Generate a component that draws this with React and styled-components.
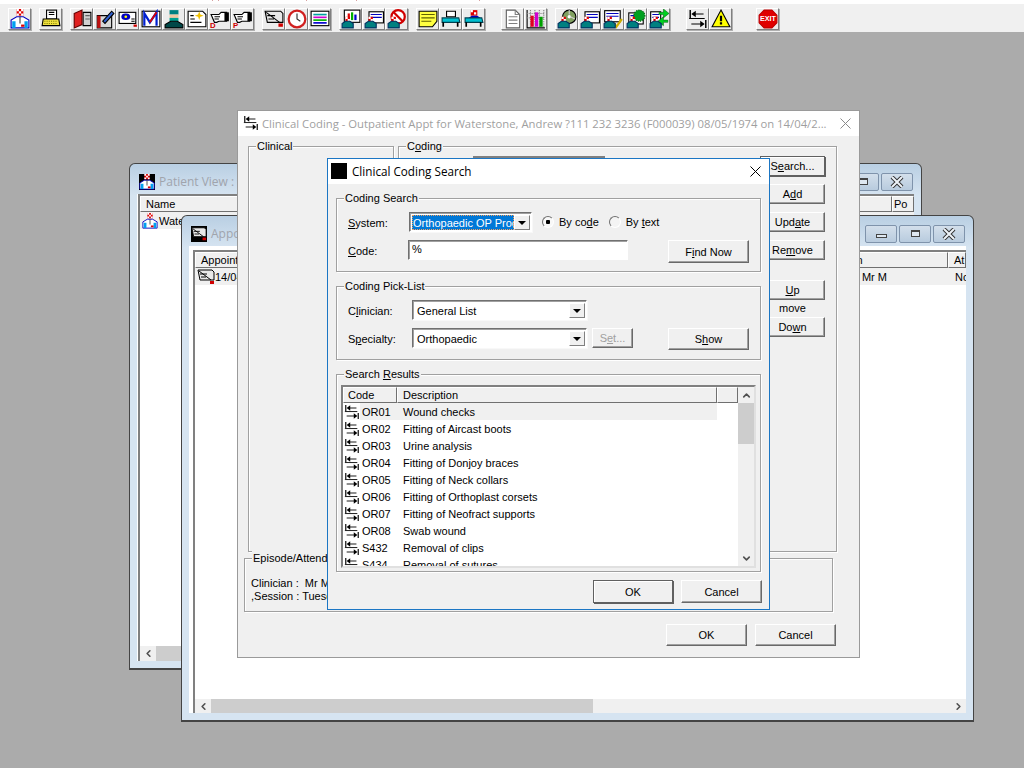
import styled, { createGlobalStyle } from "styled-components";
import { ChevronUp, ChevronDown, ChevronLeft, ChevronRight } from "lucide-react";

const GlobalStyle = createGlobalStyle`
  html, body { margin: 0; padding: 0; }
  body {
    background: #ababab;
    font-family: "Liberation Sans", Arial, sans-serif;
    font-size: 11px;
    color: #000;
    overflow: hidden;
  }
  * { box-sizing: border-box; }
`;

/* ---------- icons ---------- */

const Glyph = styled.svg`
  display: block;
  flex: none;
  width: ${({ $size }) => $size || 18}px;
  height: ${({ $size }) => $size || 18}px;
`;

const Icon = ({ size, children }) => (
  <Glyph $size={size} viewBox="0 0 18 18">
    {children}
  </Glyph>
);

const Person = ({ x = 0, y = 0 }) => (
  <g transform={`translate(${x} ${y})`}>
    <rect x="6" y="0" width="6" height="6" fill="#e00000" />
    <path d="M6 0h2v2H6zM10 0h2v2h-2zM8 2h2v2H8zM6 4h2v2H6zM10 4h2v2h-2z" fill="#fff" />
    <path d="M1 17v-7l5-3h6l5 3v7z" fill="#fff" stroke="#0000c0" />
    <path d="M2 17v-6h3v6zM13 11h3v6h-3z" fill="#00a0f0" />
    <rect x="10" y="14" width="3" height="2" fill="#e00000" />
    <path d="M9 7v6" stroke="#404040" />
  </g>
);

const Small = ({ x = 0, y = 0 }) => (
  <g transform={`translate(${x} ${y})`}>
    <rect x="3" y="0" width="4" height="4" fill="#e00000" />
    <path d="M3 0h2v2H3zM5 2h2v2H5z" fill="#fff" />
    <path d="M0 10V6l3-2h4l3 2v4z" fill="#008080" stroke="#003060" />
  </g>
);

const Form = ({ x = 0, y = 0, w = 13, h = 10 }) => (
  <g transform={`translate(${x} ${y})`}>
    <rect x="0.5" y="0.5" width={w} height={h} fill="#fff" stroke="#000" />
    <path d={`M2 3h${w - 3}M2 5.5h${w - 3}`} stroke="#0000c0" />
  </g>
);

const Arrows = ({ size = 16 }) => (
  <Icon size={size}>
    <path d="M2 1v7M16 10v7" stroke="#000" strokeWidth="1.3" />
    <path d="M3 4.500l4-3v6zM15 13.500l-4-3v6z" fill="#000" />
    <path d="M6 4.500h8M1 8.500h14M3 13.500h9" stroke="#000" />
  </Icon>
);

const DoctorIcon = () => <Icon><Person /></Icon>;
const TypewriterIcon = () => (
  <Icon>
    <rect x="5" y="1" width="9" height="8" fill="#fff" stroke="#000" />
    <path d="M7 3h5M7 5h5" stroke="#000" />
    <path d="M2 9h14l1 6H1z" fill="#f0e040" stroke="#000" />
    <path d="M3 11h12M3 13h12" stroke="#808000" strokeDasharray="1 1" />
  </Icon>
);
const BookIcon = () => (
  <Icon>
    <path d="M10 3h7v12h-7z" fill="#d0d0d0" stroke="#000" />
    <path d="M12 6h4M12 9h4" stroke="#606060" />
    <path d="M2 4l7-3v13l-7 3z" fill="#e02020" stroke="#600" />
  </Icon>
);
const NotebookIcon = () => (
  <Icon>
    <path d="M2 6h13v11H2z" fill="#d8d8d8" stroke="#000" />
    <path d="M2 6h3v11H2z" fill="#c01010" />
    <path d="M7 11L15 2l2 2-8 9z" fill="#3060d0" stroke="#000" />
  </Icon>
);
const ScanIcon = () => (
  <Icon>
    <rect x="1" y="3" width="15" height="10" fill="#fff" stroke="#000" />
    <ellipse cx="7" cy="7" rx="4" ry="3" fill="#0000c0" />
    <circle cx="7" cy="7" r="1.200" fill="#ffff00" />
    <path d="M12 9h3M12 11h3" stroke="#000" />
    <rect x="14" y="14" width="3" height="2" fill="#d00000" />
  </Icon>
);
const MailIcon = () => (
  <Icon>
    <rect x="1" y="2" width="16" height="14" fill="#fff" stroke="#000" />
    <path d="M3 15V4l5 8 6-9v12" fill="none" stroke="#0020d0" strokeWidth="2" />
    <path d="M8 12l6-9" stroke="#e00000" strokeWidth="1.500" />
  </Icon>
);
const SurgeonIcon = () => (
  <Icon>
    <path d="M5 1h8v4H5z" fill="#008080" />
    <rect x="5" y="5" width="8" height="3" fill="#f0c8a0" />
    <path d="M5 8h8v3H5z" fill="#00a090" />
    <path d="M1 17v-3l5-3h6l5 3v3z" fill="#004848" stroke="#000" />
  </Icon>
);
const StarNoteIcon = () => (
  <Icon>
    <path d="M1 2h13l3 3v11H1z" fill="#fff" stroke="#000" />
    <path d="M3 6h3M3 9h4M3 12h10" stroke="#000" />
    <path d="M11 2l1 3 3 1-3 1-1 3-1-3-3-1 3-1z" fill="#f0c000" />
  </Icon>
);
const HandIcon = ({ letter }) => (
  <Icon>
    <path d="M1 5h7l2-2h5v8H8l-2 1H4z" fill="#fff" stroke="#000" />
    <path d="M13 3h4v8h-4z" fill="#000" />
    <path d="M4 7h5M4 9h4" stroke="#000" />
    <text x="0" y="17" fontSize="7" fontWeight="700" fill="#d00000" fontFamily="Liberation Sans">{letter}</text>
  </Icon>
);
const ApptIcon = ({ size }) => (
  <Icon size={size}>
    <path d="M1 2h14l2 2v8H3z" fill="#e8e8e8" stroke="#000" />
    <path d="M2 3l12 9M3 6h7M4 9h5" stroke="#000" />
    <rect x="13" y="13" width="4" height="3" fill="#d00000" />
  </Icon>
);
const ClockIcon = () => (
  <Icon>
    <circle cx="9" cy="9" r="7.500" fill="#fff" stroke="#d02020" strokeWidth="2" />
    <path d="M9 4v5l3 2" fill="none" stroke="#303030" />
  </Icon>
);
const MonitorIcon = () => (
  <Icon>
    <rect x="1" y="2" width="16" height="13" fill="#fff" stroke="#000" />
    <path d="M3 5h12" stroke="#00a0a0" strokeWidth="1.500" />
    <path d="M3 7.500h12" stroke="#d000d0" strokeWidth="1.500" />
    <path d="M3 10h12" stroke="#00b000" strokeWidth="1.500" />
    <path d="M3 12.500h12" stroke="#0000d0" strokeWidth="1.500" />
  </Icon>
);
const ChartPersonIcon = () => (
  <Icon>
    <rect x="3" y="1" width="14" height="11" fill="#fff" stroke="#000" />
    <path d="M6 4h2v6H6z" fill="#e00000" />
    <path d="M9 3h2v7H9z" fill="#00b000" />
    <path d="M12 5h2v5h-2z" fill="#0000d0" />
    <Small x="1" y="7" />
  </Icon>
);
const FormPersonIcon = () => (
  <Icon>
    <Form x="4" y="2" />
    <Small x="1" y="7" />
  </Icon>
);
const NoPersonIcon = () => (
  <Icon>
    <circle cx="10" cy="7" r="6" fill="#fff" stroke="#d00000" strokeWidth="2" />
    <path d="M6 3l8 8" stroke="#d00000" strokeWidth="2" />
    <Small x="1" y="7" />
  </Icon>
);
const StickyIcon = () => (
  <Icon>
    <path d="M1 2h16v9l-4 5H1z" fill="#ffff40" stroke="#000" />
    <path d="M3 5h12M3 8h12M3 11h9" stroke="#606000" />
  </Icon>
);
const BedIcon = () => (
  <Icon>
    <path d="M5 2h8v5H5z" fill="#fff" stroke="#000" />
    <path d="M1 8h15l1 4H1z" fill="#00c0d0" stroke="#004050" />
    <path d="M2 12v4M15 12v4" stroke="#000" strokeWidth="1.500" />
  </Icon>
);
const BedPersonIcon = () => (
  <Icon>
    <rect x="6" y="1" width="6" height="5" fill="#e00000" />
    <path d="M6 1h2v2H6zM9 3h2v2H9z" fill="#fff" />
    <path d="M4 8l3-2h5l3 2z" fill="#0000c0" />
    <path d="M1 8h15l1 4H1z" fill="#00c0d0" stroke="#004050" />
    <path d="M2 12v4M15 12v4" stroke="#000" strokeWidth="1.500" />
  </Icon>
);
const PageIcon = () => (
  <Icon>
    <path d="M3 1h8l4 4v12H3z" fill="#fff" stroke="#606060" />
    <path d="M11 1v4h4M5 7h8M5 10h8M5 13h8" fill="none" stroke="#808080" />
  </Icon>
);
const BarsIcon = () => (
  <Icon>
    <path d="M1 1v16h16" fill="none" stroke="#000" />
    <path d="M1 4h16M1 8h16M4 1v16M8 1v16M12 1v16M16 1v16" stroke="#808080" strokeDasharray="1 1" />
    <path d="M4 6h3v10H4z" fill="#e00020" />
    <path d="M8 3h3v13H8z" fill="#d000d0" />
    <path d="M12 7h3v9h-3z" fill="#00a000" />
  </Icon>
);
const DiscIcon = () => (
  <Icon>
    <circle cx="11" cy="7" r="6" fill="#80a060" stroke="#000" />
    <circle cx="11" cy="7" r="1.500" fill="#fff" />
    <path d="M11 1v4M16 9l-4-2" stroke="#d0d0d0" />
    <Small x="1" y="7" />
  </Icon>
);
const CheckFormIcon = () => (
  <Icon>
    <Form x="1" y="1" w="14" h="10" />
    <path d="M10 13l2 3 5-7" fill="none" stroke="#d0b000" strokeWidth="2" />
    <Small x="1" y="7" />
  </Icon>
);
const GlobeIcon = () => (
  <Icon>
    <Form x="2" y="3" />
    <circle cx="12" cy="6" r="5" fill="#00a020" stroke="#006010" strokeDasharray="1 1" />
    <Small x="1" y="7" />
  </Icon>
);
const SwapIcon = () => (
  <Icon>
    <Form x="1" y="2" w="9" h="11" />
    <path d="M9 3h4V0l5 4-5 4V5H9z" fill="#00d020" stroke="#006010" strokeWidth="0.500" />
    <path d="M17 10h-4V7l-5 4 5 4v-3h4z" fill="#00d020" stroke="#006010" strokeWidth="0.500" />
    <Small x="1" y="7" />
  </Icon>
);
const WarningIcon = () => (
  <Icon>
    <path d="M9 1l8 15H1z" fill="#ffff00" stroke="#000" />
    <path d="M8 6h2v5H8zM8 12h2v2H8z" fill="#000" />
  </Icon>
);
const ExitIcon = () => (
  <Icon size={20}>
    <path d="M5.500 1h7L17 5.500v7L12.500 17h-7L1 12.500v-7z" fill="#e00000" stroke="#c00000" />
    <text x="9" y="11.200" fontSize="6.500" fontWeight="700" fill="#fff" textAnchor="middle" fontFamily="Liberation Sans">EXIT</text>
  </Icon>
);
const DarkIcon = styled.span`
  display: block;
  flex: none;
  width: 16px;
  height: 16px;
  background: #000;
`;

const HandD = () => <HandIcon letter="D" />;
const HandP = () => <HandIcon letter="P" />;
const CodingIcon = () => <Arrows size={18} />;

const toolGroups = [
  { tools: [DoctorIcon] },
  { tools: [TypewriterIcon] },
  { tools: [BookIcon, NotebookIcon, ScanIcon, MailIcon, SurgeonIcon, StarNoteIcon, HandD, HandP] },
  { tools: [ApptIcon, ClockIcon, MonitorIcon] },
  { tools: [ChartPersonIcon, FormPersonIcon, NoPersonIcon] },
  { tools: [StickyIcon, BedIcon, BedPersonIcon] },
  { tools: [PageIcon, BarsIcon], push: 8 },
  { tools: [DiscIcon, FormPersonIcon, CheckFormIcon, GlobeIcon, SwapIcon] },
  { tools: [CodingIcon, WarningIcon], push: 8 },
];

/* ---------- shell ---------- */

const TopStrip = styled.div`
  height: 4px;
  background:
    linear-gradient(#d8a0a0, #d8a0a0) 212px 0 / 1px 1px no-repeat,
    linear-gradient(#d8a0a0, #d8a0a0) 218px 0 / 1px 1px no-repeat,
    linear-gradient(#d8a0a0, #d8a0a0) 306px 0 / 1px 1px no-repeat,
    linear-gradient(#d8a0a0, #d8a0a0) 356px 0 / 1px 1px no-repeat,
    linear-gradient(#d8a0a0, #d8a0a0) 479px 0 / 1px 1px no-repeat,
    #fff;
`;

const Toolbar = styled.div`
  display: flex;
  gap: 8px;
  height: 28px;
  padding: 4px 0 0 8px;
  background: #f0f0f0;
`;

const ToolGroup = styled.div`
  display: flex;
  margin-left: ${({ $push }) => $push || 0}px;
`;

const ToolButton = styled.div`
  display: flex;
  align-items: center;
  justify-content: center;
  width: 23px;
  height: 22px;
  background: #ececec;
  border: 1px solid;
  border-color: #fff #808080 #808080 #fff;
  box-shadow: 1px 1px 0 #b0b0b0;

  svg {
    width: 20px;
    height: 20px;
  }
`;

const ExitButton = styled(ToolButton)`
  margin-left: 16px;
`;

const Desktop = styled.div`
  position: relative;
  height: 736px;
  overflow: hidden;
`;

const AppWindow = styled.div`
  position: absolute;
  left: ${({ $x }) => $x}px;
  top: ${({ $y }) => $y}px;
  width: ${({ $w }) => $w}px;
  height: ${({ $h }) => $h}px;
  display: flex;
  flex-direction: column;
  padding: 0 7px 7px;
  background: linear-gradient(#b9cfe3 0, #d6e4f1 32px);
  border: 1px solid #444;
  border-bottom-width: 2px;
  border-radius: 6px 6px 0 0;
`;

const AppTitle = styled.div`
  display: flex;
  align-items: center;
  flex: none;
  height: 30px;
  padding: 5px 1px 0 2px;
  gap: 4px;
  font-family: "Open Sans", sans-serif;
  font-size: 12px;
  color: #a0a4ac;
`;

const AppControls = styled.div`
  display: flex;
  gap: 2px;
  margin-left: auto;
`;

const CaptionButton = styled.div`
  display: flex;
  align-items: center;
  justify-content: center;
  width: 32px;
  height: 18px;
  background: linear-gradient(#d3dfeb, #b8cbde);
  border: 1px solid #7f93ab;
  border-radius: 2px;
`;

const CaptionGlyph = styled.span`
  display: block;
  width: ${({ $wide }) => ($wide ? 11 : 9)}px;
  height: ${({ $wide }) => ($wide ? 4 : 7)}px;
  margin-top: ${({ $wide }) => ($wide ? 4 : 0)}px;
  background: #dfe8f1;
  border: 1px solid #444;
  border-top-width: ${({ $wide }) => ($wide ? 1 : 2)}px;
`;

const AppClient = styled.div`
  flex: 1;
  min-height: 0;
  display: flex;
  flex-direction: column;
  background: #fff;
`;

const Sunken = styled.div`
  flex: 1;
  min-height: 0;
  display: flex;
  flex-direction: column;
  overflow: hidden;
  margin-top: ${({ $top }) => $top}px;
  margin-left: ${({ $left }) => $left}px;
  border-top: 2px solid #808080;
  border-left: 2px solid #808080;
`;

const ColumnHead = styled.div`
  display: flex;
  flex: none;
  height: 16px;
  background: #f0f0f0;
`;

const HeadCell = styled.div`
  width: ${({ $w }) => ($w ? `${$w}px` : "auto")};
  flex: ${({ $w }) => ($w ? "none" : 1)};
  height: 100%;
  padding: 0 0 0 ${({ $pad }) => $pad ?? 5}px;
  line-height: 14px;
  white-space: nowrap;
  overflow: hidden;
  border: 1px solid;
  border-color: #fff #707070 #707070 #fff;
`;

const AppRow = styled.div`
  display: flex;
  align-items: center;
  flex: none;
  height: 17px;
  padding-left: ${({ $pad }) => $pad || 0}px;
  background: ${({ $shade }) => ($shade ? "#f0f0f0" : "#fff")};
  white-space: nowrap;
`;

const RowSpacer = styled.div`
  flex: 1;
`;

const RowGap = styled.span`
  flex: none;
  width: ${({ $w }) => $w}px;
`;

const ClippedCell = styled.span`
  flex: none;
  width: ${({ $w }) => $w}px;
  overflow: hidden;
`;

const HScroll = styled.div`
  display: flex;
  flex: none;
  align-items: center;
  height: ${({ $h }) => $h}px;
  background: #f0f0f0;
`;

const ScrollEnd = styled.div`
  display: flex;
  align-items: center;
  justify-content: center;
  flex: none;
  width: 16px;
  height: 100%;
  color: #505050;
`;

const ScrollThumb = styled.div`
  flex: none;
  width: ${({ $w }) => $w}px;
  height: 100%;
  background: #cdcdcd;
`;

/* ---------- white-title dialogs ---------- */

const Dialog = styled.div`
  position: absolute;
  left: ${({ $x }) => $x}px;
  top: ${({ $y }) => $y}px;
  width: ${({ $w }) => $w}px;
  height: ${({ $h }) => $h}px;
  display: flex;
  flex-direction: column;
  background: #f0f0f0;
  border: 1px solid ${({ $active }) => ($active ? "#1b76c4" : "#9a9a9a")};
`;

const DialogTitle = styled.div`
  display: flex;
  align-items: center;
  flex: none;
  height: 25px;
  gap: ${({ $gap }) => $gap}px;
  padding: 0 8px 1px ${({ $pad }) => $pad}px;
  background: #fff;
  font-family: "Open Sans", sans-serif;
  font-size: ${({ $fs }) => $fs}px;
  white-space: nowrap;
  color: ${({ $active }) => ($active ? "#000" : "#9f9f9f")};
`;

const CloseMark = styled.svg`
  flex: none;
  width: 11px;
  height: 11px;
  margin-left: auto;
  stroke: ${({ $active }) => ($active ? "#000" : "#8a8a8a")};
`;

const Close = ({ active }) => (
  <CloseMark $active={active} viewBox="0 0 11 11">
    <path d="M0.500 0.500l10 10M10.500 0.500l-10 10" strokeWidth="1" />
  </CloseMark>
);

const GroupBox = styled.div`
  position: relative;
  flex: ${({ $grow }) => ($grow ? 1 : "none")};
  width: ${({ $w }) => ($w ? `${$w}px` : "auto")};
  height: ${({ $h }) => ($h ? `${$h}px` : "auto")};
  margin: ${({ $margin }) => $margin || 0};
  padding: ${({ $pad }) => $pad || 0};
  border: 1px solid #a0a0a0;
  box-shadow: 1px 1px 0 #fff, inset 1px 1px 0 #fff;
`;

const Legend = styled.span`
  position: absolute;
  left: 7px;
  top: -8px;
  padding: 0 1px;
  background: #f0f0f0;
  line-height: 14px;
  white-space: nowrap;
`;

const Key = styled.span`
  text-decoration: underline;
`;

const Button = styled.div`
  display: flex;
  align-items: center;
  justify-content: center;
  flex: none;
  width: ${({ $w }) => $w}px;
  height: ${({ $h }) => $h || 20}px;
  margin-left: ${({ $left }) => ($left ? `${$left}px` : "0")};
  ${({ $auto }) => $auto && "margin-left: auto;"}
  background: #f0f0f0;
  white-space: nowrap;
  color: ${({ $off }) => ($off ? "#a0a0a0" : "#000")};
  border: 1px solid;
  border-color: ${({ $default }) =>
    $default ? "#606060" : "#fff #696969 #696969 #fff"};
  box-shadow: ${({ $default }) =>
    $default
      ? "inset 1px 1px 0 #fff, 1px 1px 0 #606060"
      : "inset -1px -1px 0 #a0a0a0"};
`;

/* clinical coding window */

const ClinicalBody = styled.div`
  flex: 1;
  display: flex;
  flex-direction: column;
  padding: 10px 22px 0 10px;
`;

const ClinicalTop = styled.div`
  display: flex;
  flex: none;
  gap: 4px;
  height: 406px;
`;

const CodingInner = styled.div`
  display: flex;
  justify-content: space-between;
  padding: 9px 11px 0 74px;
`;

const CodingStub = styled.div`
  width: 132px;
  height: 2px;
  background: #808080;
`;

const SideButtons = styled.div`
  display: flex;
  flex-direction: column;
  gap: 8px;
`;

const SideGap = styled.div`
  height: 4px;
`;

const MoveLabel = styled.div`
  height: 9px;
  margin: -4px 0;
  line-height: 9px;
  text-align: center;
`;

const EpisodeLine = styled.div`
  line-height: 13px;
  white-space: pre;
`;

const EpisodeText = styled.div`
  padding-top: 18px;
  padding-left: 6px;
`;

const BottomButtons = styled.div`
  display: flex;
  justify-content: flex-end;
  gap: 8px;
  margin: 12px 1px 0 0;
`;

/* search dialog */

const SearchBody = styled.div`
  flex: 1;
  display: flex;
  flex-direction: column;
  padding: 14px 8px 0;
`;

const FormRow = styled.div`
  display: flex;
  align-items: flex-start;
  margin-top: ${({ $top }) => $top || 0}px;
`;

const FieldLabel = styled.div`
  flex: none;
  width: ${({ $w }) => $w}px;
  height: 20px;
  line-height: 22px;
`;

const ComboBox = styled.div`
  display: flex;
  flex: none;
  width: ${({ $w }) => $w}px;
  height: 20px;
  padding: 2px 1px 1px 2px;
  background: #fff;
  border: 1px solid;
  border-color: #707070 #fff #fff #707070;
  box-shadow: inset 1px 1px 0 #a0a0a0, 1px 1px 0 #f8f8f8;
`;

const ComboText = styled.div`
  flex: 1;
  min-width: 0;
  overflow: hidden;
  padding-left: ${({ $picked }) => ($picked ? 1 : 2)}px;
  line-height: 17px;
  white-space: nowrap;
  ${({ $picked }) => $picked && "background: #0078d7; color: #fff; outline: 1px dotted #f0a060; outline-offset: -1px;"}
`;

const ComboArrow = styled.div`
  display: flex;
  align-items: center;
  justify-content: center;
  flex: none;
  width: 16px;
  background: #f0f0f0;
  border: 1px solid;
  border-color: #fff #808080 #808080 #fff;
  &::after {
    content: "";
    border-style: solid;
    border-width: 4px 4px 0;
    border-color: #000 transparent transparent;
  }
`;

const RadioDot = styled.span`
  display: block;
  flex: none;
  width: 12px;
  height: 12px;
  border-radius: 50%;
  border: 1px solid;
  border-color: #707070 #fff #fff #707070;
  background: ${({ $on }) =>
    $on ? "radial-gradient(circle, #000 0 2px, #f8f8f8 2.500px)" : "#f4f4f4"};
`;

const RadioItem = styled.div`
  display: flex;
  align-items: center;
  flex: none;
  gap: 5px;
  height: 20px;
  margin-left: ${({ $left }) => $left}px;
`;

const TextField = styled.div`
  flex: none;
  width: ${({ $w }) => $w}px;
  height: 20px;
  padding: 1px 3px;
  background: #fff;
  line-height: 15px;
  border: 1px solid;
  border-color: #707070 #fff #fff #707070;
  box-shadow: inset 1px 1px 0 #a0a0a0;
`;

const ResultList = styled.div`
  display: flex;
  height: 183px;
  overflow: hidden;
  background: #fff;
  border: 2px solid;
  border-color: #808080 #e0e0e0 #e0e0e0 #808080;
`;

const ResultMain = styled.div`
  flex: 1;
  min-width: 0;
  display: flex;
  flex-direction: column;
  overflow: hidden;
`;

const ResultRow = styled.div`
  display: flex;
  align-items: center;
  flex: none;
  height: 17px;
  padding-left: 1px;
`;

const RowCell = styled.div`
  display: flex;
  align-items: center;
  width: 357px;
  height: 100%;
  background: ${({ $shade }) => ($shade ? "#f0f0f0" : "transparent")};
`;

const CodeText = styled.span`
  width: 43px;
  padding-left: 2px;
`;

const VScroll = styled.div`
  display: flex;
  flex-direction: column;
  flex: none;
  width: 16px;
  background: #f0f0f0;
`;

const VScrollEnd = styled.div`
  display: flex;
  align-items: center;
  justify-content: center;
  flex: none;
  height: 16px;
  color: #505050;
`;

const VThumb = styled.div`
  flex: none;
  height: 41px;
  background: #cdcdcd;
`;

const VTrack = styled.div`
  flex: 1;
`;

const SearchButtons = styled.div`
  display: flex;
  justify-content: flex-end;
  gap: 8px;
  margin: 8px -1px 0 0;
`;

const results = [
  ["OR01", "Wound checks"],
  ["OR02", "Fitting of Aircast boots"],
  ["OR03", "Urine analysis"],
  ["OR04", "Fitting of Donjoy braces"],
  ["OR05", "Fitting of Neck collars"],
  ["OR06", "Fitting of Orthoplast corsets"],
  ["OR07", "Fitting of Neofract supports"],
  ["OR08", "Swab wound"],
  ["S432", "Removal of clips"],
  ["S434", "Removal of sutures"],
];

const OnBlack = styled.span`
  display: block;
  flex: none;
  background: #000;
`;

const Caption = ({ withMin }) => (
  <AppControls>
    {withMin && (
      <CaptionButton>
        <CaptionGlyph $wide />
      </CaptionButton>
    )}
    <CaptionButton>
      <CaptionGlyph />
    </CaptionButton>
    <CaptionButton>
      <svg width="14" height="12" viewBox="0 0 14 12">
        <path d="M2 1l10 10M12 1L2 11" stroke="#333" strokeWidth="4" />
        <path d="M2 1l10 10M12 1L2 11" stroke="#eef3f8" strokeWidth="2" />
      </svg>
    </CaptionButton>
  </AppControls>
);

export default function App() {
  return (
    <>
      <GlobalStyle />
      <TopStrip />
      <Toolbar>
        {toolGroups.map((group, g) => (
          <ToolGroup key={g} $push={group.push}>
            {group.tools.map((Tool, i) => (
              <ToolButton key={i}>
                <Tool />
              </ToolButton>
            ))}
          </ToolGroup>
        ))}
        <ExitButton>
          <ExitIcon />
        </ExitButton>
      </Toolbar>

      <Desktop>
        {/* patient view, furthest back */}
        <AppWindow $x={129} $y={131} $w={793} $h={507}>
          <AppTitle>
            <OnBlack>
              <Icon size={16}><Person /></Icon>
            </OnBlack>
            Patient View : 1
            <Caption withMin />
          </AppTitle>
          <AppClient>
            <Sunken $top={0} $left={1}>
              <ColumnHead>
                <HeadCell $pad={5}>Name</HeadCell>
                <HeadCell $w={22} $pad={1}>Po</HeadCell>
              </ColumnHead>
              <AppRow $shade $pad={2}>
                <Icon size={16}><Person /></Icon>
                <RowGap $w={1} />
                Waterstone
              </AppRow>
              <RowSpacer />
              <HScroll $h={15}>
                <ScrollEnd><ChevronLeft size={11} strokeWidth={3.5} /></ScrollEnd>
                <ScrollThumb $w={400} />
              </HScroll>
            </Sunken>
          </AppClient>
        </AppWindow>

        {/* appointments */}
        <AppWindow $x={181} $y={183} $w={793} $h={507}>
          <AppTitle>
            <OnBlack>
              <ApptIcon size={16} />
            </OnBlack>
            Appointments
            <Caption withMin />
          </AppTitle>
          <AppClient>
            <Sunken $top={4} $left={4}>
              <ColumnHead>
                <HeadCell $w={622} $pad={5}>Appointment</HeadCell>
                <HeadCell $pad={3}>Clinician</HeadCell>
                <HeadCell $w={18} $pad={5}>At</HeadCell>
              </ColumnHead>
              <AppRow $shade $pad={2}>
                <ApptIcon />
                14/04/2014
                <RowSpacer />
                , Mr M
                <RowGap $w={68} />
                <ClippedCell $w={11}>No</ClippedCell>
              </AppRow>
              <RowSpacer />
              <HScroll $h={14}>
                <ScrollEnd><ChevronLeft size={11} strokeWidth={3.5} /></ScrollEnd>
                <ScrollThumb $w={382} />
                <RowSpacer />
                <ScrollEnd><ChevronRight size={11} strokeWidth={3.5} /></ScrollEnd>
              </HScroll>
            </Sunken>
          </AppClient>
        </AppWindow>

        {/* clinical coding, inactive behind the search */}
        <Dialog $x={237} $y={78} $w={623} $h={548}>
          <DialogTitle $pad={5} $gap={3} $fs={11.3}>
            <Arrows />
            Clinical Coding - Outpatient Appt for Waterstone, Andrew ?111 232 3236 (F000039) 08/05/1974 on 14/04/2...
            <Close />
          </DialogTitle>
          <ClinicalBody>
            <ClinicalTop>
              <GroupBox $w={146}>
                <Legend>Clinical</Legend>
              </GroupBox>
              <GroupBox $grow>
                <Legend>C<Key>o</Key>ding</Legend>
                <CodingInner>
                  <CodingStub />
                  <SideButtons>
                    <Button $w={65} $default>S<Key>e</Key>arch...</Button>
                    <Button $w={65}>A<Key>d</Key>d</Button>
                    <Button $w={65}>Upd<Key>a</Key>te</Button>
                    <Button $w={65}>Re<Key>m</Key>ove</Button>
                    <SideGap />
                    <Button $w={65}><Key>U</Key>p</Button>
                    <MoveLabel>move</MoveLabel>
                    <Button $w={65}>Do<Key>w</Key>n</Button>
                  </SideButtons>
                </CodingInner>
              </GroupBox>
            </ClinicalTop>
            <GroupBox $h={54} $margin="6px 4px 0 -4px">
              <Legend>Episode/Attendance</Legend>
              <EpisodeText>
                <EpisodeLine>Clinician :  Mr M</EpisodeLine>
                <EpisodeLine>,Session : Tuesday</EpisodeLine>
              </EpisodeText>
            </GroupBox>
            <BottomButtons>
              <Button $w={81} $h={22}>OK</Button>
              <Button $w={81} $h={22}>Cancel</Button>
            </BottomButtons>
          </ClinicalBody>
        </Dialog>

        {/* the search dialog on top */}
        <Dialog $x={327} $y={126} $w={443} $h={452} $active>
          <DialogTitle $pad={3} $gap={5} $fs={11.7} $active>
            <DarkIcon />
            Clinical Coding Search
            <Close active />
          </DialogTitle>
          <SearchBody>
            <GroupBox $h={74} $pad="13px 11px 0 11px">
              <Legend>Coding Search</Legend>
              <FormRow>
                <FieldLabel $w={61}><Key>S</Key>ystem:</FieldLabel>
                <ComboBox $w={123}>
                  <ComboText $picked>Orthopaedic OP Proc</ComboText>
                  <ComboArrow />
                </ComboBox>
                <RadioItem $left={10}>
                  <RadioDot $on />
                  <span>By co<Key>d</Key>e</span>
                </RadioItem>
                <RadioItem $left={10}>
                  <RadioDot />
                  <span>By <Key>t</Key>ext</span>
                </RadioItem>
              </FormRow>
              <FormRow $top={8}>
                <FieldLabel $w={60}><Key>C</Key>ode:</FieldLabel>
                <TextField $w={220}>%</TextField>
                <Button $w={81} $h={23} $auto>F<Key>i</Key>nd Now</Button>
              </FormRow>
            </GroupBox>

            <GroupBox $h={74} $margin="14px 0 0" $pad="13px 11px 0 11px">
              <Legend>Coding Pick-List</Legend>
              <FormRow>
                <FieldLabel $w={64}>C<Key>l</Key>inician:</FieldLabel>
                <ComboBox $w={175}>
                  <ComboText>General List</ComboText>
                  <ComboArrow />
                </ComboBox>
              </FormRow>
              <FormRow $top={8}>
                <FieldLabel $w={64}>S<Key>p</Key>ecialty:</FieldLabel>
                <ComboBox $w={175}>
                  <ComboText>Orthopaedic</ComboText>
                  <ComboArrow />
                </ComboBox>
                <Button $w={41} $left={5} $off>S<Key>e</Key>t...</Button>
                <Button $w={81} $h={22} $auto>S<Key>h</Key>ow</Button>
              </FormRow>
            </GroupBox>

            <GroupBox $h={198} $margin="14px 0 0" $pad="10px 4px 0">
              <Legend>Search <Key>R</Key>esults</Legend>
              <ResultList>
                <ResultMain>
                  <ColumnHead>
                    <HeadCell $w={54} $pad={4}>Code</HeadCell>
                    <HeadCell $w={320}>Description</HeadCell>
                    <HeadCell />
                  </ColumnHead>
                  {results.map(([code, text], i) => (
                    <ResultRow key={code}>
                      <Arrows />
                      <RowCell $shade={i === 0}>
                        <CodeText>{code}</CodeText>
                        {text}
                      </RowCell>
                    </ResultRow>
                  ))}
                </ResultMain>
                <VScroll>
                  <VScrollEnd><ChevronUp size={11} strokeWidth={3.5} /></VScrollEnd>
                  <VThumb />
                  <VTrack />
                  <VScrollEnd><ChevronDown size={11} strokeWidth={3.5} /></VScrollEnd>
                </VScroll>
              </ResultList>
            </GroupBox>

            <SearchButtons>
              <Button $w={80} $h={23} $default>OK</Button>
              <Button $w={81} $h={23}>Cancel</Button>
            </SearchButtons>
          </SearchBody>
        </Dialog>
      </Desktop>
    </>
  );
}
